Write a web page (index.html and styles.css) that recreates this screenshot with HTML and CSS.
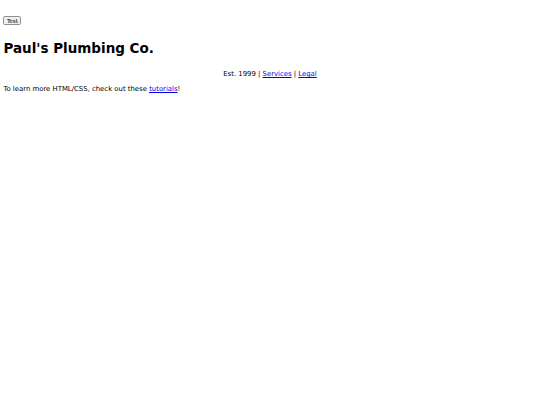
FILE: index.html
```html
<!DOCTYPE html>
<html>
<head>
<meta charset="utf-8">
<link rel="stylesheet" href="styles.css">
</head>
<body>
<div class="top"><button class="btn">Test</button></div>
<h1 class="title">Paul's Plumbing Co.</h1>
<p class="info">Est. 1999 | <a href="#">Services</a> | <a href="#">Legal</a></p>
<p class="note">To learn more HTML/CSS, check out these <a href="#">tutorials</a>!</p>
</body>
</html>
```
FILE: styles.css
```css
html { background: #fff; }
body {
  margin: 3.4px;
  font-family: "DejaVu Sans", sans-serif;
  font-size: 6.9px;
  color: #000;
}
.top { padding-top: 12.5px; line-height: 8.5px; }
.btn {
  font-family: "DejaVu Sans", sans-serif;
  font-size: 5.6px;
  padding: 0.8px 2.5px;
  margin: 0;
  border: 1px solid #8f8f8f;
  border-radius: 1.5px;
  background: #efefef;
  color: #000;
}
.title {
  font-size: 13.5px;
  font-weight: bold;
  margin: 15px 0 14px;
}
.info { text-align: center; margin: 6.75px 0; }
.note { margin: 6.75px 0; }
a { color: #00e; }
```
